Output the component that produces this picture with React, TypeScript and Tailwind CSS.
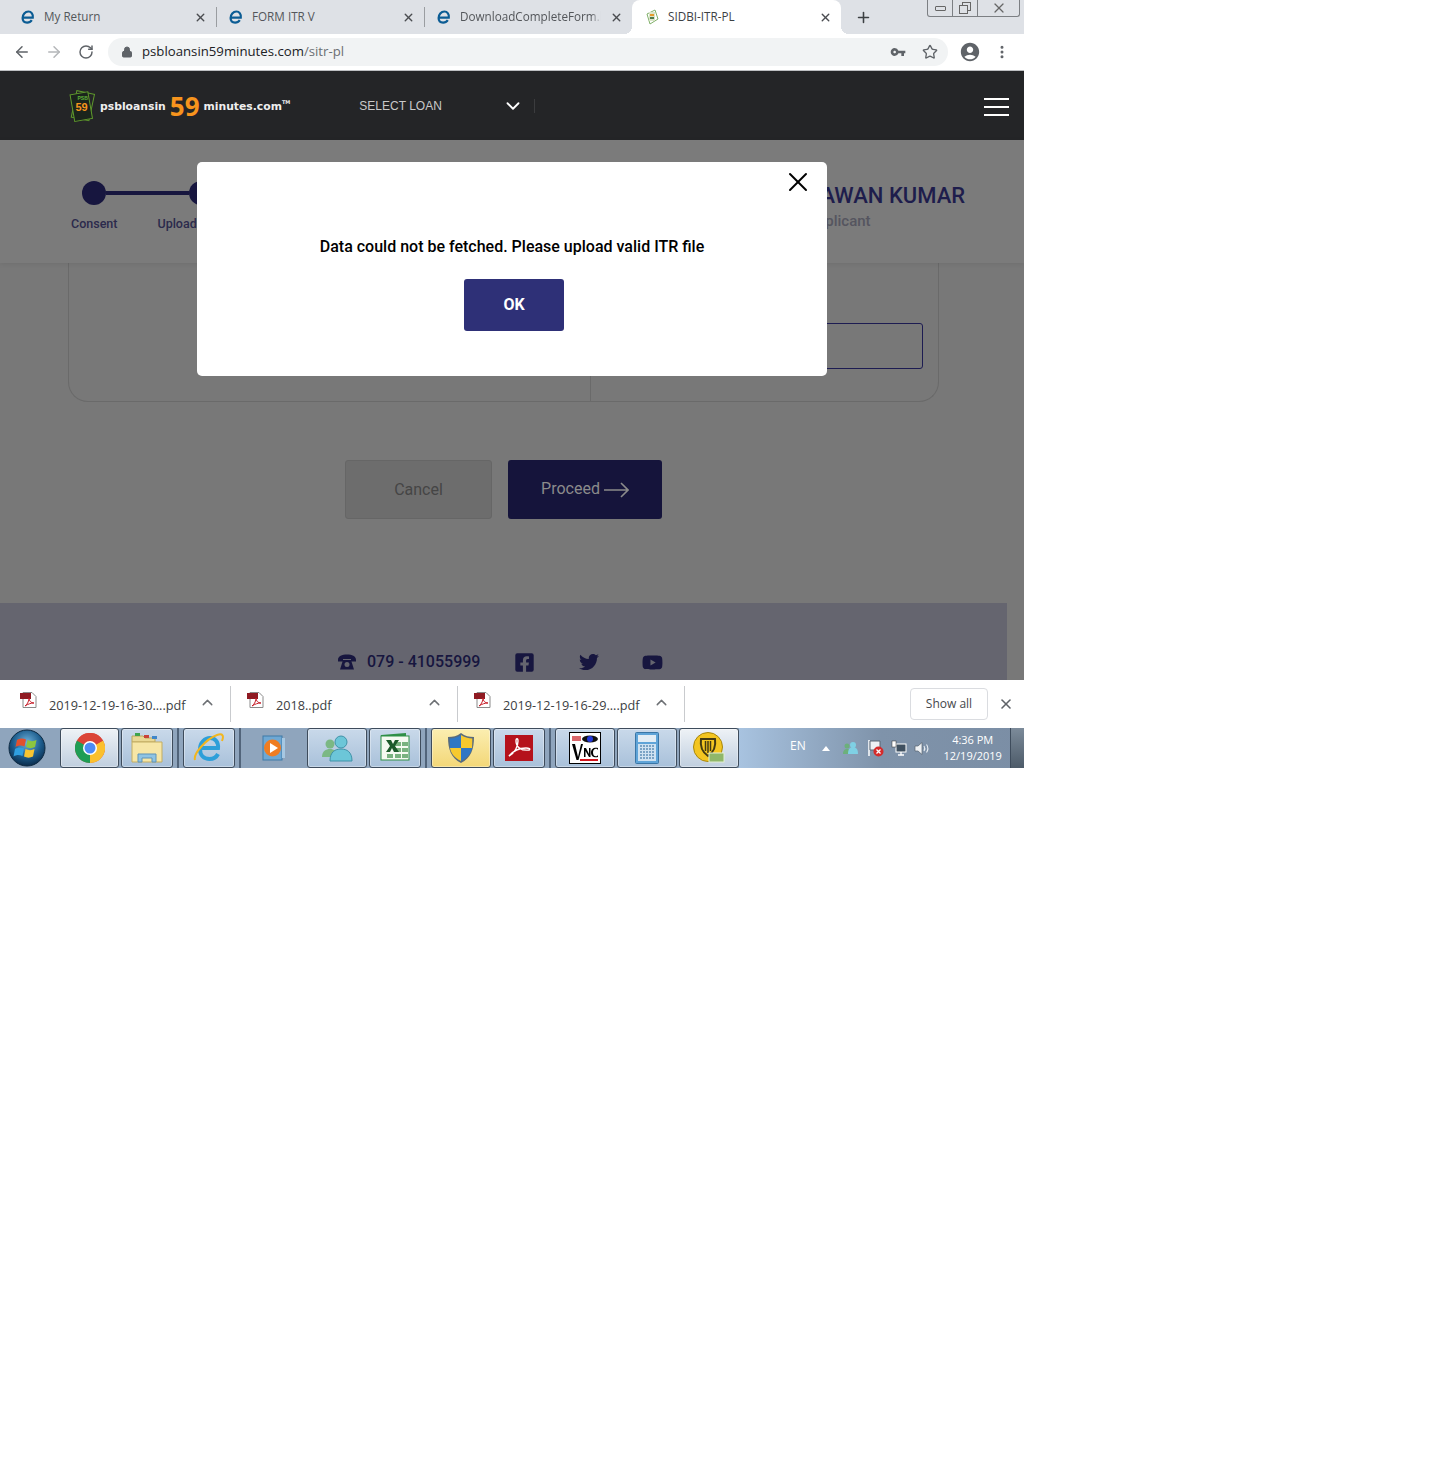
import React from 'react';
import { ArrowLeft, ArrowRight, RotateCw, Lock, Star, MoreVertical, X, Plus, ChevronDown, ChevronUp } from 'lucide-react';
import { MdAccountCircle, MdVpnKey } from 'react-icons/md';
import { FaFacebookSquare, FaTwitter, FaYoutube } from 'react-icons/fa';

const IeGlyph = () => (
  <svg width="16" height="16" viewBox="0 0 16 16" fill="none" className="shrink-0">
    <path d="M3.4 8.6h9.4c.5-3.4-1.4-6.1-4.4-6.1-3.3 0-5.8 3-5.8 6.5 0 2.8 1.8 4.6 4.5 4.6 2 0 3.6-.8 4.7-2.5" stroke="#0b5c94" strokeWidth="2.2" />
  </svg>
);

const SidbiGlyph = () => (
  <svg width="16" height="16" viewBox="0 0 16 16" className="shrink-0">
    <path d="M3 5 11 1l3 9-8 5z" fill="none" stroke="#7fb069" strokeWidth="1" />
    <rect x="5" y="3" width="6" height="9" fill="#d9e4c8" />
    <rect x="6" y="5" width="4" height="2" fill="#e59a2c" />
    <rect x="6" y="8" width="4" height="2" fill="#4f7a4a" />
  </svg>
);

const Tab = ({ title, width, pad, icon, fade }: { title: string; width: string; pad: string; icon: React.ReactNode; fade?: boolean }) => (
  <div className={`flex h-full items-center ${pad} ${width}`}>
    {icon}
    <span className={`ml-[8px] flex-1 overflow-hidden whitespace-nowrap text-[11.7px] text-[#53565a] ${fade ? '[mask-image:linear-gradient(to_left,transparent,black_10px)]' : ''}`}>{title}</span>
    <X size={13} strokeWidth={2.6} className="mx-[9px] shrink-0 text-[#4a4c50]" />
  </div>
);

const TabDivider = () => <div className="h-[20px] w-px bg-[#9a9da1]" />;

const Step = ({ label }: { label: string }) => (
  <span className="text-[12.5px] font-medium text-[#2b2a4c]">{label}</span>
);

const PdfIcon = () => (
  <svg width="17" height="17" viewBox="0 0 17 17" className="shrink-0">
    <path d="M3 .5h9l4 4v11H3z" fill="#fff" stroke="#8a8a8a" />
    <rect x="0" y="1" width="11" height="6" fill="#8f1a22" />
    <path d="M5 14c3-2 4-6 4-8 0 3 2 5 5 5-3 0-6 1-9 3z" fill="none" stroke="#c7202b" strokeWidth="1" />
  </svg>
);

const DownloadItem = ({ name, width, pad }: { name: string; width: string; pad: string }) => (
  <div className={`flex h-[36px] items-center border-r border-[#c9cbce] ${pad} ${width}`}>
    <div className="-mt-[7px]"><PdfIcon /></div>
    <span className="ml-[12px] mt-[3px] flex-1 text-[12.7px] text-[#3c4043]">{name}</span>
    <ChevronUp size={17} strokeWidth={2} className="mr-[14px] -mt-[4px] text-[#6d7074]" />
  </div>
);

const TaskButton = ({ width, active, first, children }: { width: string; active?: boolean; first?: boolean; children: React.ReactNode }) => (
  <div
    className={`flex h-[40px] shrink-0 items-center justify-center rounded-[3px] border border-[#3e4c5c] shadow-[inset_0_0_0_1px_rgba(255,255,255,0.35)] ${width} ${
      active
        ? 'bg-gradient-to-b from-[#fbeeb0] to-[#f3d777]'
        : first
          ? 'bg-gradient-to-b from-[#eef2f6] to-[#c0cfdf]'
          : 'bg-gradient-to-b from-[#c9d9ea] to-[#a9c1da]'
    }`}
  >
    {children}
  </div>
);

const Gripper = () => <div className="mx-[4px] h-[40px] w-[2px] shrink-0 border-x border-[#51647a] bg-[#b7c8da]" />;

const WindowsOrb = () => (
  <svg width="38" height="38" viewBox="0 0 38 38">
    <defs>
      <radialGradient id="orb" cx="50%" cy="35%" r="65%">
        <stop offset="0" stopColor="#6fb2dc" />
        <stop offset="0.6" stopColor="#1c5c8c" />
        <stop offset="1" stopColor="#0b2c4c" />
      </radialGradient>
    </defs>
    <circle cx="19" cy="19" r="18" fill="url(#orb)" stroke="#0e2a42" />
    <path d="M9 11c3-2 6-2 9-.5l-1.500 7c-3-1.500-6-1.500-9 .5z" fill="#e2502d" />
    <path d="M19.500 11c3 1.500 6 1.500 9 0l-1.500 7c-3 1.500-6 1.500-9 0z" fill="#8cc63f" />
    <path d="M7 20c3-2 6-2 9-.5L14.500 27c-3-1.500-6-1.500-9 .5z" fill="#2f9fe0" />
    <path d="M17.500 20c3 1.500 6 1.500 9 0L25 27.500c-3 1.500-6 1.500-9 0z" fill="#f7c531" />
  </svg>
);

const ChromeIcon = () => (
  <svg width="30" height="30" viewBox="0 0 30 30">
    <circle cx="15" cy="15" r="15" fill="#db4437" />
    <path d="M15 15 28 7.500A15 15 0 0 1 15 30z" fill="#fbc02d" />
    <path d="M15 15 15 30A15 15 0 0 1 2 7.500z" fill="#1f9d55" />
    <path d="M15 15 2 7.500A15 15 0 0 1 28 7.500z" fill="#db4437" />
    <circle cx="15" cy="15" r="7" fill="#fff" />
    <circle cx="15" cy="15" r="5.500" fill="#4c8bf5" />
  </svg>
);

const FolderIcon = () => (
  <svg width="32" height="30" viewBox="0 0 32 30">
    <path d="M1 3h11l2 2h10v4H1z" fill="#e9d894" stroke="#b9a55d" />
    <rect x="4" y="0" width="5" height="3" fill="#3fa34d" />
    <rect x="13" y="2" width="5" height="3" fill="#c9433a" />
    <rect x="21" y="3" width="5" height="3" fill="#3f86c9" />
    <path d="M1 9h30v20H1z" fill="#f6e6a6" stroke="#c2ad63" />
    <path d="M7 29v-8h18v8h-4v-4H11v4z" fill="#8fc4e4" stroke="#5f93b8" />
  </svg>
);

const IeLargeIcon = () => (
  <svg width="32" height="32" viewBox="0 0 32 32" fill="none">
    <path d="M8 16h17c.6-6-3-10-8-10S7 10.500 7 17s4 10 9.500 10c4 0 7-2 8.500-5" stroke="#2e9fd9" strokeWidth="4" />
    <path d="M2 28C0 22 13 7 24 3c6-2 7 1 5 6" stroke="#f2b61e" strokeWidth="2" />
  </svg>
);

const MediaIcon = () => (
  <svg width="30" height="30" viewBox="0 0 30 30">
    <rect x="3" y="3" width="19" height="24" fill="#6ea8d4" stroke="#3f7ba8" />
    <rect x="22" y="5" width="3" height="20" fill="#a7c8e2" />
    <circle cx="12.500" cy="15" r="8.500" fill="#ef7d22" />
    <path d="M10 10v10l8-5z" fill="#fff" />
  </svg>
);

const PeopleIcon = () => (
  <svg width="32" height="30" viewBox="0 0 32 30">
    <circle cx="9" cy="11" r="4.500" fill="#7bb884" />
    <path d="M1 24c0-6 4-8 8-8s7 2 7 8z" fill="#7bb884" />
    <circle cx="20" cy="9" r="6" fill="#6cc6d8" stroke="#3f92a8" />
    <path d="M9 28c0-9 5-12 11-12s11 3 11 12z" fill="#6cc6d8" stroke="#3f92a8" />
  </svg>
);

const ExcelIcon = () => (
  <svg width="32" height="32" viewBox="0 0 32 32">
    <path d="M2 3 27 1v4H2z" fill="#2f8f46" />
    <rect x="2" y="4" width="28" height="24" fill="#f5faf1" stroke="#2f8f46" />
    <rect x="16" y="10" width="6" height="4" fill="#79b27f" />
    <rect x="23" y="10" width="6" height="4" fill="#79b27f" />
    <rect x="16" y="16" width="6" height="4" fill="#79b27f" />
    <rect x="23" y="16" width="6" height="4" fill="#79b27f" />
    <rect x="8" y="22" width="6" height="4" fill="#79b27f" />
    <rect x="16" y="22" width="6" height="4" fill="#79b27f" />
    <rect x="23" y="22" width="6" height="4" fill="#79b27f" />
    <path d="M7 8h5l2 4 2-4h4l-4 6 4 6h-5l-2-4-2 4H7l4-6z" fill="#1d5a2b" />
  </svg>
);

const ShieldIcon = () => (
  <svg width="28" height="32" viewBox="0 0 28 32">
    <path d="M14 1c4 3 8 4 13 4 0 12-3 21-13 26C4 26 1 17 1 5c5 0 9-1 13-4z" fill="#5a6b7b" />
    <path d="M14 3v13H3c-.2-3-.3-6-.3-9.500 4-.2 8-1.200 11.300-3.500z" fill="#2f77c4" />
    <path d="M14 3c3.300 2.300 7.300 3.300 11.300 3.500 0 3.500-.1 6.500-.3 9.500H14z" fill="#f6c92f" />
    <path d="M3 16h11v13C7 25.500 4 21.500 3 16z" fill="#f6c92f" />
    <path d="M14 16h11c-1 5.500-4 9.500-11 13z" fill="#2f77c4" />
  </svg>
);

const AcrobatIcon = () => (
  <svg width="28" height="26" viewBox="0 0 28 26" fill="none">
    <rect width="28" height="26" fill="#b5121b" />
    <path d="M4 21c6-3 9-10 9-15 0-3-2-3-2 0 0 6 5 10 13 9 2-1 0-2-3-2-5 0-12 2-17 8z" stroke="#fff" strokeWidth="1.400" />
  </svg>
);

const VncIcon = () => (
  <svg width="32" height="32" viewBox="0 0 32 32">
    <rect x="0.500" y="0.500" width="31" height="31" fill="#fff" stroke="#000" />
    <path d="M3 4h9v5H3z" fill="#c9252c" opacity="0.7" />
    <ellipse cx="21" cy="7" rx="8" ry="3.500" fill="#111" />
    <circle cx="21" cy="7" r="3" fill="#2237d8" />
    <path d="M3 12h3l3 13 3-13h2L9.500 28h-2z" fill="#000" />
    <path d="M15 16h2l3 6v-6h1.500v9H20l-3.500-6v6H15zM29 18c-1-2-5-2-5 2.500s4 4.500 5 2.500v2c-3 1-7 0-7-4.500s4-5.500 7-4.500z" fill="#000" />
    <rect x="11" y="27" width="18" height="2" fill="#d3141c" />
  </svg>
);

const CalcIcon = () => (
  <svg width="24" height="32" viewBox="0 0 24 32">
    <rect x="0.500" y="0.500" width="23" height="31" rx="1" fill="#5fa4d8" stroke="#3a76a6" />
    <rect x="3" y="3" width="18" height="7" fill="#e3edf5" />
    <rect x="3" y="12" width="18" height="17" fill="#cfe2f1" />
    <path d="M5 14h14M5 17h14M5 20h14M5 23h14M5 26h14" stroke="#5f8fb6" strokeWidth="1.500" strokeDasharray="2 1" />
  </svg>
);

const McafeeIcon = () => (
  <svg width="32" height="32" viewBox="0 0 32 32">
    <circle cx="15" cy="15" r="14.500" fill="#f3c521" stroke="#a7860c" />
    <path d="M8 7h14c1 7-1 13-7 17C9 20 7 14 8 7z" fill="none" stroke="#433a12" strokeWidth="2" />
    <path d="M12.500 9v10M15 9v12M17.500 9v10" stroke="#433a12" strokeWidth="1.500" />
    <rect x="16" y="21" width="15" height="9" fill="#8fb76a" stroke="#e3efd2" />
  </svg>
);

const TrayFlag = () => (
  <svg width="17" height="18" viewBox="0 0 17 18">
    <path d="M2 1v16" stroke="#fff" strokeWidth="1.500" />
    <path d="M3 2h10v9H3z" fill="#eef1f4" stroke="#5b6673" />
    <circle cx="11.500" cy="12.500" r="5" fill="#d52b2b" />
    <path d="m9.500 10.500 4 4m0-4-4 4" stroke="#fff" strokeWidth="1.300" />
  </svg>
);

const TrayPeople = () => (
  <svg width="15" height="14" viewBox="0 0 15 14">
    <circle cx="4" cy="5" r="2.500" fill="#6cb07b" />
    <path d="M0 13c0-4 2-5 4-5s4 1 4 5z" fill="#6cb07b" />
    <circle cx="10" cy="4" r="3" fill="#7fd0e4" />
    <path d="M5 13c0-5 2-7 5-7s5 2 5 7z" fill="#7fd0e4" />
  </svg>
);

const TrayNetwork = () => (
  <svg width="16" height="16" viewBox="0 0 16 16" fill="none">
    <rect x="5" y="4" width="10" height="8" fill="#3f5060" stroke="#fff" />
    <path d="M7 15h6M10 12v3" stroke="#fff" strokeWidth="1.300" />
    <rect x="1" y="1" width="4" height="6" fill="#fff" stroke="#333" strokeWidth="0.500" />
  </svg>
);

const TraySpeaker = () => (
  <svg width="16" height="15" viewBox="0 0 16 15" fill="none">
    <path d="M1 5h3l4-3.500v12L4 10H1z" fill="#eef1f4" stroke="#56616e" strokeWidth="0.700" />
    <path d="M10 5c1 1.500 1 3.500 0 5M12.500 3.500c1.700 2.500 1.700 5.500 0 8" stroke="#e8edf2" strokeWidth="1.100" />
  </svg>
);

const LogoMark = () => (
  <svg width="30" height="36" viewBox="0 0 30 36" className="shrink-0">
    <rect x="7" y="4" width="18" height="27" transform="rotate(12 15 17)" fill="none" stroke="#5f9a2c" />
    <rect x="5" y="5" width="18" height="27" transform="rotate(-10 15 17)" fill="#1b241c" stroke="#5f9a2c" />
    <text x="10.500" y="12" fontSize="5" fontWeight="700" fill="#5fb13a" className="font-['Liberation_Sans',sans-serif]">PSB</text>
    <text x="8.500" y="23" fontSize="11" fontWeight="700" fill="#f7941d" className="font-['Liberation_Sans',sans-serif]">59</text>
  </svg>
);

export default function App() {
  return (
    <div className="min-h-[1479px] bg-white font-['Roboto',sans-serif]">
      <div className="relative h-[768px] w-[1024px] overflow-hidden">
        {/* browser chrome */}
        <div className="relative flex h-[34px] items-center bg-[#dee1e6] font-['Open_Sans',sans-serif]">
          <Tab title="My Return" width="w-[216px]" pad="pl-[20px]" icon={<IeGlyph />} />
          <TabDivider />
          <Tab title="FORM ITR V" width="w-[207px]" pad="pl-[11px]" icon={<IeGlyph />} />
          <TabDivider />
          <Tab title="DownloadCompleteForm.html" width="w-[207px]" pad="pl-[11px]" icon={<IeGlyph />} fade />
          <div className="relative flex h-full w-[209px] items-center rounded-t-[8px] bg-white pl-[12px]">
            <div className="absolute bottom-0 left-[-8px] h-[8px] w-[8px] bg-[radial-gradient(circle_at_0_0,transparent_8px,white_8px)]" />
            <div className="absolute bottom-0 right-[-8px] h-[8px] w-[8px] bg-[radial-gradient(circle_at_100%_0,transparent_8px,white_8px)]" />
            <SidbiGlyph />
            <span className="ml-[8px] flex-1 text-[11.7px] text-[#3c4043]">SIDBI-ITR-PL</span>
            <X size={13} strokeWidth={2.6} className="mr-[9px] text-[#4a4c50]" />
          </div>
          <Plus size={17} strokeWidth={2.2} className="ml-[14px] text-[#3c4043]" />
          <div className="absolute right-[4px] top-0 flex h-[17px] w-[93px] rounded-b-[3px] border border-t-0 border-[#7c7f83] text-[#666]">
            <div className="flex w-[25px] items-center justify-center border-r border-[#7c7f83]"><div className="h-[5px] w-[11px] rounded-[1px] border border-[#666]" /></div>
            <div className="flex w-[25px] items-center justify-center border-r border-[#7c7f83]">
              <svg width="12" height="12" viewBox="0 0 12 12" fill="none" stroke="#666"><rect x="3.500" y="0.500" width="8" height="8" /><rect x="0.500" y="3.500" width="8" height="8" fill="#dee1e6" /></svg>
            </div>
            <div className="flex flex-1 items-center justify-center"><X size={16} strokeWidth={1.800} /></div>
          </div>
        </div>

        <div className="flex h-[37px] items-center border-b border-[#bdbfc2] bg-white">
          <ArrowLeft size={18} strokeWidth={2} className="ml-[13px] text-[#5f6368]" />
          <ArrowRight size={18} strokeWidth={2} className="ml-[14px] text-[#b4b6b9]" />
          <RotateCw size={16} strokeWidth={2.200} className="ml-[15px] text-[#5f6368]" />
          <div className="ml-[14px] flex h-[28px] w-[840px] items-center rounded-full bg-[#f1f3f4] pl-[13px]">
            <Lock size={12} fill="#5f6368" strokeWidth={2} className="text-[#5f6368]" />
            <span className="ml-[9px] flex-1 font-['Open_Sans',sans-serif] text-[13.2px]">
              <span className="text-[#202124]">psbloansin59minutes.com</span>
              <span className="text-[#6b6f73]">/sitr-pl</span>
            </span>
            <MdVpnKey size={16} className="mr-[16px] text-[#5f6368]" />
            <Star size={16} strokeWidth={2} className="mr-[10px] text-[#5f6368]" />
          </div>
          <MdAccountCircle size={22} className="ml-[11px] text-[#5f6368]" />
          <MoreVertical size={16} strokeWidth={2.500} className="ml-[13px] text-[#5f6368]" />
        </div>

        {/* page with modal open */}
        <div className="relative h-[609px] overflow-hidden bg-[#787878]">
          <header className="flex h-[69px] items-center bg-[#242527] pl-[67px]">
            <LogoMark />
            <div className="ml-[3px] mt-[3px] flex items-center whitespace-nowrap font-['DejaVu_Sans',sans-serif] text-[10.8px] font-bold text-[#eeeeee]">
              <span>psbloansin</span>
              <span className="mx-[4px] -mt-[3px] font-['Open_Sans',sans-serif] text-[26px] leading-none text-[#f7941d]">59</span>
              <span>minutes.com</span>
              <span className="-mt-[8px] text-[5px]">TM</span>
            </div>
            <span className="ml-[69px] font-['Liberation_Sans',sans-serif] text-[12px] text-[#c9c9c9]">SELECT LOAN</span>
            <ChevronDown size={22} strokeWidth={2} className="ml-[60px] text-white" />
            <div className="ml-[10px] h-[14px] w-px bg-[#3b3c3e]" />
            <div className="ml-auto mr-[15px] mt-[2px] flex h-[18px] w-[25px] flex-col justify-between">
              <div className="h-[2px] bg-white" /><div className="h-[2px] bg-white" /><div className="h-[2px] bg-white" />
            </div>
          </header>

          <div className="relative z-10 flex h-[123px] bg-[#7b7b7b] pl-[71px] pr-[59px] pt-[41px] shadow-[0_1px_5px_rgba(0,0,0,0.08)]">
            <div className="w-[200px]">
              <div className="flex items-center pl-[11px]">
                <div className="h-[24px] w-[24px] shrink-0 rounded-full bg-[#17163f]" />
                <div className="h-[4px] w-[83px] shrink-0 bg-[#17163f]" />
                <div className="h-[24px] w-[24px] shrink-0 rounded-full bg-[#17163f]" />
              </div>
              <div className="mt-[10px] flex gap-[40px]">
                <Step label="Consent" />
                <Step label="Upload" />
              </div>
            </div>
            <div className="ml-auto w-[157px]">
              <div className="mt-[1px] whitespace-nowrap text-[22px] font-medium leading-[27px] text-[#1e1d4c]">PAWAN KUMAR</div>
              <div className="mt-[1px] -ml-[1px] text-[15px] font-medium text-[#55555f]">Applicant</div>
            </div>
          </div>

          <div className="flex h-[139px] justify-start pl-[68px]">
            <div className="flex h-full w-[871px] rounded-b-[20px] border border-t-0 border-[#6a6a6a]">
              <div className="w-[522px] border-r border-[#6a6a6a]" />
              <div className="flex flex-1 items-start justify-end pr-[15px] pt-[60px]">
                <div className="h-[46px] w-[320px] rounded-[3px] border border-[#1d1c52]" />
              </div>
            </div>
          </div>

          <div className="mt-[58px] flex pl-[345px]">
            <div className="flex h-[59px] w-[147px] items-center justify-center rounded-[3px] border border-[#666] bg-[#6d6d6d] text-[16px] text-[#454545]">Cancel</div>
            <div className="ml-[16px] flex h-[59px] w-[154px] items-center justify-center gap-[4px] rounded-[3px] bg-[#15143b] text-[16px] text-[#8b8b8b]">
              <span className="-mt-[2px]">Proceed</span>
              <svg width="25" height="16" viewBox="0 0 25 16" fill="none" stroke="currentColor" strokeWidth="1.600"><path d="M0 8h24M17 1l7 7-7 7" /></svg>
            </div>
          </div>

          <footer className="mt-[84px] flex h-[77px] w-[1007px] items-start bg-[#65656f] pl-[338px] pt-[48px]">
            <svg width="18" height="16" viewBox="0 0 18 16" className="mt-[3px] text-[#17163f]" fill="currentColor">
              <path d="M0 6C0 2 4 .5 9 .5S18 2 18 6v1.500h-5V5H5v2.500H0z" />
              <path d="M5 6h8l3 9.500H2z" />
              <circle cx="9" cy="10.500" r="2.500" fill="#65656f" />
            </svg>
            <span className="ml-[11px] mt-[1px] text-[16px] font-medium leading-[20px] text-[#17163f]">079 - 41055999</span>
            <FaFacebookSquare size={21} className="ml-[34px] mt-[1px] text-[#17163f]" />
            <FaTwitter size={20} className="ml-[44px] mt-[1px] text-[#17163f]" />
            <FaYoutube size={21} className="ml-[43px] mt-[1px] text-[#17163f]" />
          </footer>

          <div className="absolute left-[197px] top-[91px] z-20 flex h-[214px] w-[630px] flex-col items-center rounded-[5px] bg-white pt-[75px]">
            <X size={32} strokeWidth={1.500} className="absolute right-[13px] top-[4px] text-black" />
            <p className="text-[16px] font-medium leading-[19px] text-black">Data could not be fetched. Please upload valid ITR file</p>
            <button className="ml-[4px] mt-[23px] h-[52px] w-[100px] rounded-[3px] bg-[#2e3077] text-[16px] font-bold text-white">OK</button>
          </div>
        </div>

        {/* download shelf */}
        <div className="flex h-[48px] items-center bg-white font-['Open_Sans',sans-serif]">
          <DownloadItem name="2019-12-19-16-30....pdf" width="w-[231px]" pad="pl-[20px]" />
          <DownloadItem name="2018..pdf" width="w-[227px]" pad="pl-[16px]" />
          <DownloadItem name="2019-12-19-16-29....pdf" width="w-[227px]" pad="pl-[16px]" />
          <div className="ml-auto flex h-[32px] w-[78px] items-center justify-center rounded-[4px] border border-[#dadce0] text-[12px] font-medium text-[#45484c]">Show all</div>
          <X size={16} strokeWidth={2.400} className="ml-[10px] mr-[10px] text-[#5f6368]" />
        </div>

        {/* windows taskbar */}
        <div className="flex h-[40px] items-center bg-[#8fa5bd] font-['Open_Sans',sans-serif]">
          <div className="ml-[8px] mr-[14px] flex w-[38px] shrink-0 justify-center"><WindowsOrb /></div>
          <TaskButton width="w-[59px]" first><ChromeIcon /></TaskButton>
          <div className="w-[2px] shrink-0" />
          <TaskButton width="w-[52px]"><FolderIcon /></TaskButton>
          <Gripper />
          <TaskButton width="w-[52px]"><IeLargeIcon /></TaskButton>
          <Gripper />
          <div className="flex h-[40px] w-[62px] shrink-0 items-center justify-center pr-[3px]"><MediaIcon /></div>
          <TaskButton width="w-[60px]"><PeopleIcon /></TaskButton>
          <div className="w-[2px] shrink-0" />
          <TaskButton width="w-[52px]"><ExcelIcon /></TaskButton>
          <Gripper />
          <TaskButton width="w-[60px]" active><ShieldIcon /></TaskButton>
          <div className="w-[2px] shrink-0" />
          <TaskButton width="w-[52px]"><AcrobatIcon /></TaskButton>
          <Gripper />
          <TaskButton width="w-[60px]"><VncIcon /></TaskButton>
          <div className="w-[2px] shrink-0" />
          <TaskButton width="w-[60px]"><CalcIcon /></TaskButton>
          <div className="w-[2px] shrink-0" />
          <TaskButton width="w-[60px]" first><McafeeIcon /></TaskButton>
          <div className="flex h-full flex-1 items-center bg-gradient-to-r from-[#a8c3e0] via-[#7f93aa] to-[#7b8ea5] text-white">
            <span className="ml-[51px] -mt-[5px] text-[12px]">EN</span>
            <svg width="8" height="5" viewBox="0 0 8 5" className="ml-[16px]"><path d="M4 0 8 5H0z" fill="#fff" /></svg>
            <div className="ml-[13px]"><TrayPeople /></div>
            <div className="ml-[9px]"><TrayFlag /></div>
            <div className="ml-[7px]"><TrayNetwork /></div>
            <div className="ml-[7px]"><TraySpeaker /></div>
            <div className="ml-[8px] w-[70px] text-center text-[11px] leading-[16px]">
              <div>4:36 PM</div>
              <div>12/19/2019</div>
            </div>
            <div className="ml-auto h-full w-[14px] border-l border-[#3e4c5c] bg-gradient-to-b from-[#7c8b9a] to-[#4d5b69]" />
          </div>
        </div>
      </div>
    </div>
  );
}
